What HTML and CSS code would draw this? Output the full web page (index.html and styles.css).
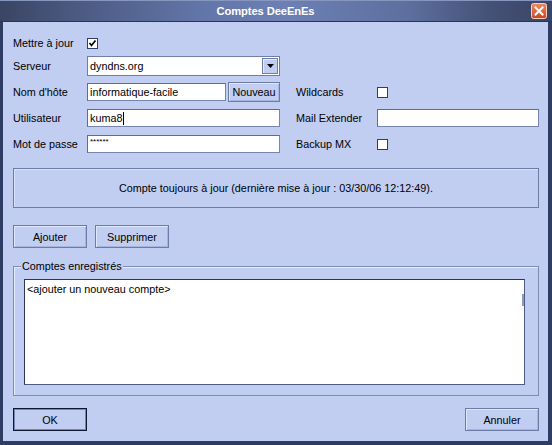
FILE: index.html
```html
<!DOCTYPE html>
<html lang="fr">
<head>
<meta charset="utf-8">
<title>Comptes DeeEnEs</title>
<link rel="stylesheet" href="styles.css">
</head>
<body>
<div class="window">
  <div class="titlebar">
    <span class="title">Comptes DeeEnEs</span>
    <span class="close">
      <svg width="16" height="16" viewBox="0 0 16 16">
        <defs>
          <linearGradient id="cg" x1="0" y1="0" x2="0" y2="1">
            <stop offset="0" stop-color="#f08a62"/>
            <stop offset="1" stop-color="#cc4420"/>
          </linearGradient>
        </defs>
        <rect x="0.5" y="0.5" width="15" height="15" rx="2" fill="url(#cg)" stroke="#f6d2c0"/>
        <path d="M4.5 4.5 L11.5 11.5 M11.5 4.5 L4.5 11.5" stroke="#fff" stroke-width="2" stroke-linecap="square"/>
      </svg>
    </span>
  </div>
  <div class="body">
    <div class="form">
      <span class="lbl">Mettre à jour</span>
      <span class="check">
        <svg width="9" height="9" viewBox="0 0 9 9"><path d="M1.5 4 L3.5 6.5 L7.5 1.5" fill="none" stroke="#000" stroke-width="1.7"/></svg>
      </span>
      <span></span><span></span><span></span>

      <span class="lbl">Serveur</span>
      <div class="select">
        <span class="sel-text">dyndns.org</span>
        <span class="sel-btn">
          <svg width="7" height="4" viewBox="0 0 7 4"><path d="M0 0 H7 L3.5 4 Z" fill="#000"/></svg>
        </span>
      </div>
      <span></span><span></span><span></span>

      <span class="lbl">Nom d'hôte</span>
      <div class="host">
        <span class="field host-field">informatique-facile</span>
        <span class="btn small">Nouveau</span>
      </div>
      <span></span>
      <span class="lbl">Wildcards</span>
      <span class="check"></span>

      <span class="lbl">Utilisateur</span>
      <span class="field">kuma8<span class="caret"></span></span>
      <span></span>
      <span class="lbl">Mail Extender</span>
      <span class="field"></span>

      <span class="lbl">Mot de passe</span>
      <span class="field"><span class="pw">******</span></span>
      <span></span>
      <span class="lbl">Backup MX</span>
      <span class="check"></span>
    </div>

    <div class="status">Compte toujours à jour (dernière mise à jour : 03/30/06 12:12:49).</div>

    <div class="actions">
      <span class="btn">Ajouter</span>
      <span class="btn">Supprimer</span>
    </div>

    <fieldset class="group">
      <legend>Comptes enregistrés</legend>
      <div class="list">
        <div class="item">&lt;ajouter un nouveau compte&gt;</div>
        <span class="thumb"></span>
      </div>
    </fieldset>

    <div class="footer">
      <span class="btn default">OK</span>
      <span class="btn">Annuler</span>
    </div>
  </div>
</div>
</body>
</html>
```

FILE: styles.css
```css
html, body {
  margin: 0;
  padding: 0;
}

body {
  font-family: "Liberation Sans", Arial, sans-serif;
  font-size: 10.8px;
  color: #000;
  background: #c1cdf1;
}

.window {
  width: 552px;
  height: 445px;
  display: flex;
  flex-direction: column;
  box-sizing: border-box;
  overflow: hidden;
}

.titlebar {
  height: 22px;
  flex: none;
  display: flex;
  align-items: center;
  background: linear-gradient(to right, #3a4464 0%, #4c5a82 14%, #6275a8 36%, #6c80b4 52%, #5d6f9e 74%, #434f74 90%, #3a4464 100%);
  border-top: 1px solid #8796bf;
  border-bottom: 1px solid #2a3454;
  box-sizing: border-box;
}

.title {
  flex: 1;
  text-align: center;
  color: #fff;
  font-weight: bold;
  font-size: 11.2px;
  letter-spacing: -0.1px;
}

.close {
  width: 16px;
  height: 16px;
  margin-right: 5px;
  display: flex;
}

.body {
  flex: 1;
  background: #c1cdf1;
  border-left: 3px solid #2e3b62;
  border-right: 4px solid #2e3b62;
  border-bottom: 4px solid #2e3b62;
  padding: 14px 9px 0 10px;
  display: flex;
  flex-direction: column;
}

.form {
  display: grid;
  grid-template-columns: 74px 193px 16px 81px 162px;
  grid-template-rows: 14px 20px 20px 20px 20px;
  row-gap: 6px;
  align-items: center;
}

.lbl {
  white-space: nowrap;
}

.check {
  width: 11px;
  height: 11px;
  box-sizing: border-box;
  background: #fff;
  border: 1px solid #2b3f6e;
  display: flex;
  align-items: center;
  justify-content: center;
}

.field {
  height: 18px;
  box-sizing: border-box;
  background: #fff;
  border: 1px solid #7585ad;
  border-top-color: #5d6c94;
  border-left-color: #5d6c94;
  padding: 0 2px;
  display: flex;
  align-items: center;
  white-space: nowrap;
}

.caret {
  width: 1px;
  height: 13px;
  background: #000;
  margin-left: 1px;
}

.pw {
  font-size: 8px;
  align-self: flex-start;
  margin-top: 1px;
}

.select {
  height: 20px;
  box-sizing: border-box;
  background: #fff;
  border: 1px solid #6e7ea8;
  display: flex;
  align-items: center;
  padding: 1px 1px 1px 2px;
}

.sel-text {
  flex: 1;
}

.sel-btn {
  width: 16px;
  height: 16px;
  box-sizing: border-box;
  background: #c1cdf1;
  border: 1px solid #7080aa;
  box-shadow: inset 1px 1px 0 #e2e9ff;
  display: flex;
  align-items: center;
  justify-content: center;
}

.host {
  display: flex;
  align-items: center;
  gap: 2px;
}

.host-field {
  width: 139px;
}

.btn {
  width: 74px;
  height: 23px;
  box-sizing: border-box;
  border: 1px solid #6c7ca6;
  box-shadow: inset 1px 1px 0 #dfe7ff, inset -1px -1px 0 #a7b5dc;
  background: #c1cdf1;
  display: flex;
  align-items: center;
  justify-content: center;
  white-space: nowrap;
}

.btn.small {
  width: 52px;
  height: 20px;
}

.btn.default {
  border: 1px solid #0e1630;
  box-shadow: inset 0 0 0 1px #7686b0;
}

.status {
  margin-top: 14px;
  height: 40px;
  box-sizing: border-box;
  border: 1px solid #6d7da7;
  box-shadow: inset 1px 1px 0 #d8e1fb;
  display: flex;
  align-items: center;
  justify-content: center;
}

.actions {
  margin-top: 17px;
  display: flex;
  gap: 8px;
}

.group {
  margin: 11px 0 0 0;
  padding: 6px 13px 10px 10px;
  border: 1px solid #7d8cb5;
  box-shadow: inset 1px 1px 0 #e4ebff;
  min-width: 0;
}

.group legend {
  padding: 0 1px;
  margin-left: -3px;
  line-height: 14px;
  background: #c1cdf1;
}

.list {
  position: relative;
  height: 106px;
  box-sizing: border-box;
  background: #fff;
  border: 1px solid #4d5c84;
  border-top-color: #2b3658;
  border-left-color: #2b3658;
  padding: 3px 2px;
}

.thumb {
  position: absolute;
  right: 0;
  top: 14px;
  width: 2px;
  height: 12px;
  background: #8e9cc4;
}

.footer {
  margin-top: 12px;
  display: flex;
  justify-content: space-between;
}
```
